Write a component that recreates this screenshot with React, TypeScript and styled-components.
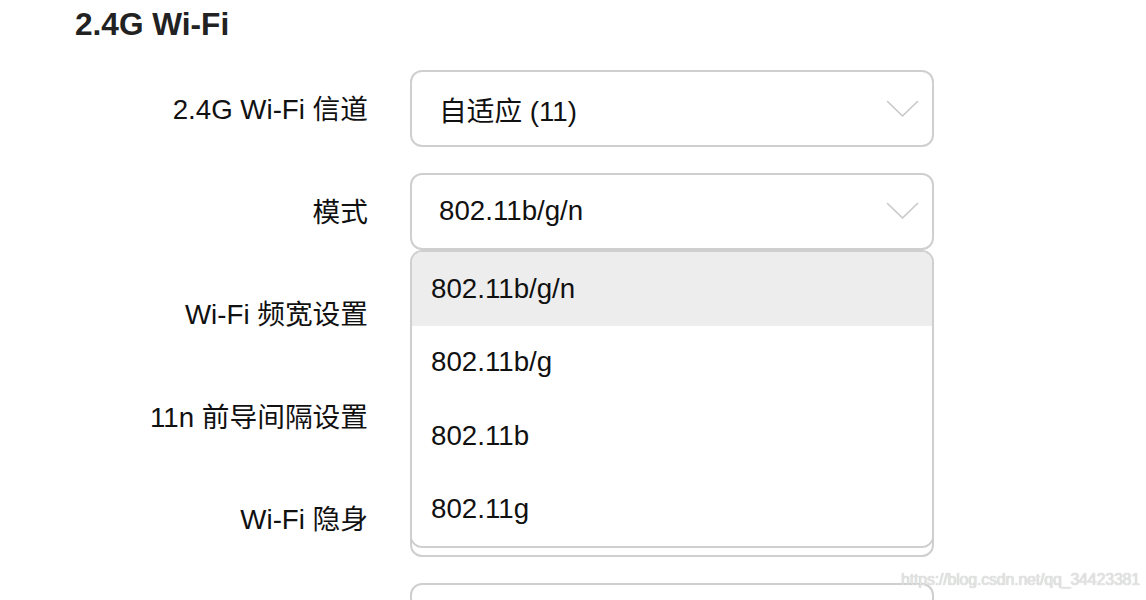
import React from "react";
import styled, { createGlobalStyle } from "styled-components";

const GlobalStyle = createGlobalStyle`
  html, body {
    margin: 0;
    padding: 0;
    background: #ffffff;
  }
  body {
    font-family: "Liberation Sans", "Noto Sans CJK SC", Arial, sans-serif;
    color: #111111;
    overflow: hidden;
  }
`;

const Page = styled.div`
  position: relative;
  width: 1146px;
  height: 600px;
  overflow: hidden;
  box-sizing: border-box;
  padding: 9px 0 0 75px;
`;

const Heading = styled.h2`
  margin: 0;
  font-size: 31.6px;
  line-height: 31px;
  font-weight: 700;
  color: #222222;
`;

const Form = styled.div`
  margin-top: 30px;
  display: grid;
  grid-template-columns: 293px 524px;
  column-gap: 42px;
  row-gap: 25.5px;
`;

const Label = styled.div`
  justify-self: end;
  align-self: center;
  padding-top: 3px;
  font-size: 27.7px;
  line-height: 32px;
  color: #111111;
  white-space: nowrap;
`;

const SelectWrap = styled.div`
  position: relative;
`;

const SelectBox = styled.div`
  box-sizing: border-box;
  height: 77px;
  border: 2px solid #cfcfcf;
  border-radius: 12px;
  background: #ffffff;
  display: flex;
  align-items: center;
  padding: 0 13px 0 27px;
  font-size: 27.7px;
  color: #111111;
`;

const Value = styled.span`
  flex: 1;
  white-space: nowrap;
`;

const Chevron = styled.svg`
  flex: none;
  width: 33px;
  height: 18px;
`;

const Dropdown = styled.div`
  position: absolute;
  top: calc(100% + 0.5px);
  left: 0;
  right: 0;
  z-index: 2;
  box-sizing: border-box;
  border: 2px solid #cfcfcf;
  border-radius: 12px;
  background: #ffffff;
  overflow: hidden;
`;

const Option = styled.div<{ $active?: boolean }>`
  height: 73.5px;
  display: flex;
  align-items: center;
  padding-left: 19px;
  font-size: 27.7px;
  color: #111111;
  background: ${(p) => (p.$active ? "#ededed" : "#ffffff")};
`;

const Watermark = styled.div`
  position: absolute;
  right: 6px;
  top: 570px;
  font-size: 16px;
  line-height: 20px;
  color: #e4e4e4;
  text-shadow: 0 0 1px #b8b8b8;
  letter-spacing: -0.2px;
  z-index: 3;
`;

const ChevronIcon = () => (
  <Chevron viewBox="0 0 33 18">
    <polyline
      points="1.5,1.5 16.5,16 31.5,1.5"
      fill="none"
      stroke="#c8c8c8"
      strokeWidth="1.6"
      strokeLinecap="round"
      strokeLinejoin="round"
    />
  </Chevron>
);

const modeOptions = ["802.11b/g/n", "802.11b/g", "802.11b", "802.11g"];

const rows: { label: string; value: string; open?: boolean }[] = [
  { label: "2.4G Wi-Fi 信道", value: "自适应 (11)" },
  { label: "模式", value: "802.11b/g/n", open: true },
  { label: "Wi-Fi 频宽设置", value: "" },
  { label: "11n 前导间隔设置", value: "" },
  { label: "Wi-Fi 隐身", value: "" },
  { label: "", value: "" },
];

export default function App() {
  return (
    <>
      <GlobalStyle />
      <Page>
        <Heading>2.4G Wi-Fi</Heading>
        <Form>
          {rows.map((r, i) => (
            <React.Fragment key={i}>
              <Label>{r.label}</Label>
              <SelectWrap>
                <SelectBox>
                  <Value>{r.value}</Value>
                  <ChevronIcon />
                </SelectBox>
                {r.open && (
                  <Dropdown>
                    {modeOptions.map((o, j) => (
                      <Option key={o} $active={j === 0}>
                        {o}
                      </Option>
                    ))}
                  </Dropdown>
                )}
              </SelectWrap>
            </React.Fragment>
          ))}
        </Form>
        <Watermark>https://blog.csdn.net/qq_34423381</Watermark>
      </Page>
    </>
  );
}
